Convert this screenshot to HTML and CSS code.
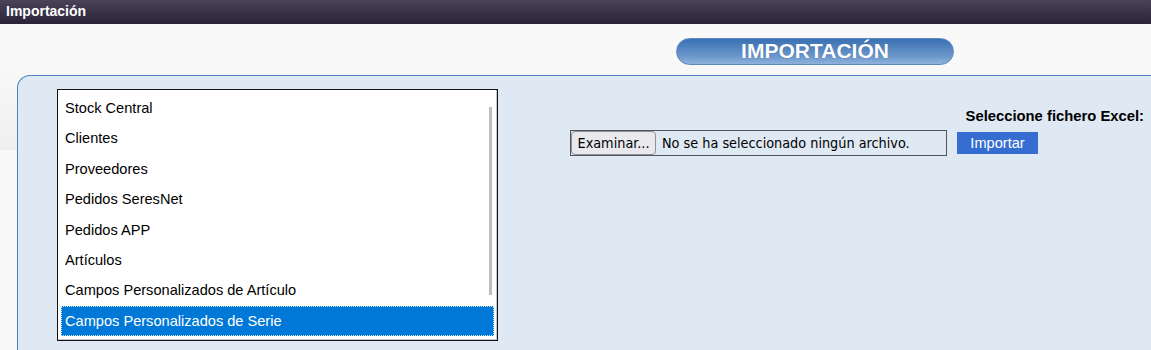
FILE: index.html
```html
<!DOCTYPE html>
<html lang="es">
<head>
  <meta charset="UTF-8">
  <title>Importación</title>
  <link rel="stylesheet" href="styles.css">
</head>
<body>
<div class="head">
  <h1>Importación</h1>
</div>
<div class="content">
  <div class="pill">IMPORTACIÓN</div>
  <div class="panel">
    <div class="listBox">
      <ul>
        <li>Stock Central</li>
        <li>Clientes</li>
        <li>Proveedores</li>
        <li>Pedidos SeresNet</li>
        <li>Pedidos APP</li>
        <li>Artículos</li>
        <li>Campos Personalizados de Artículo</li>
        <li class="selected">Campos Personalizados de Serie</li>
      </ul>
      <span class="scroll"></span>
    </div>
    <div class="side">
      <p class="label">Seleccione fichero Excel:</p>
      <div class="fileRow">
        <div class="fileInput">
          <span class="fileBtn">Examinar...</span>
          <span class="fileName">No se ha seleccionado ningún archivo.</span>
        </div>
        <span class="importBtn">Importar</span>
      </div>
    </div>
  </div>
</div>
</body>
</html>
```

FILE: styles.css
```css
*{
  margin: 0;
  padding: 0;
  box-sizing: border-box;
}
html,body{
  width: 100%;
  height: 100%;
  overflow: hidden;
  background-color: #f9f9f9;
  font-family: "Liberation Sans", Arial, sans-serif;
}
/*barra superior*/
.head{
  height: 24px;
  background: linear-gradient(to bottom, #4b4358, #2a2236);
  padding-left: 6px;
}
.head h1{
  color: #fff;
  font-size: 14px;
  line-height: 22px;
}
/*contenido*/
.content{
  height: 326px;
  padding-top: 14px;
  background: linear-gradient(to bottom, #f9f9f9 0, #f9f9f9 36px, #efefef 126px, #f9f9f9 126px);
}
.pill{
  width: 278px;
  height: 27px;
  margin-left: 676px;
  border: 1px solid #5a88bf;
  border-radius: 14px;
  background: linear-gradient(to bottom, #3a70b3, #6d98cc 70%, #8eb2dc);
  color: #fff;
  font-size: 21px;
  font-weight: bold;
  text-align: center;
  line-height: 24px;
  text-shadow: 0 0 1px #2c5b94;
}
.panel{
  display: flex;
  margin-top: 10px;
  margin-left: 17px;
  height: 275px;
  border: 1px solid #4a82c2;
  border-right: 0;
  border-bottom: 0;
  border-radius: 13px 0 0 0;
  background-color: #dfe9f4;
  padding-top: 13px;
}
/*lista*/
.listBox{
  position: relative;
  width: 441px;
  height: 252px;
  margin-left: 39px;
  border: 1px solid #111;
  box-shadow: inset -1px -1px 0 #c8c8c8;
  background-color: #fff;
  padding: 3px 3px 0 3px;
}
.listBox ul{
  list-style: none;
}
.listBox li{
  height: 30.4px;
  line-height: 30px;
  padding-left: 4px;
  font-size: 14.6px;
  color: #000;
  white-space: nowrap;
}
.listBox li.selected{
  background-color: #0078d7;
  color: #fff;
  outline: 1px dotted #cfe4f7;
  outline-offset: -1px;
}
.scroll{
  position: absolute;
  left: 431px;
  top: 17px;
  width: 3px;
  height: 188px;
  background-color: #bdbdbd;
}
/*lado derecho*/
.side{
  flex: 1;
  padding-top: 19px;
}
.label{
  text-align: right;
  padding-right: 7px;
  font-size: 14.8px;
  font-weight: bold;
  line-height: 17px;
  color: #000;
}
.fileRow{
  display: flex;
  align-items: center;
  margin-top: 5px;
  margin-left: 72px;
}
.fileInput{
  display: flex;
  align-items: center;
  width: 377px;
  height: 26px;
  border: 1px solid #555;
  font-family: "DejaVu Sans Condensed", sans-serif;
  font-size: 14.3px;
  color: #000;
  white-space: nowrap;
}
.fileBtn{
  height: 24px;
  line-height: 22px;
  width: 85px;
  border: 1px solid #8f8f9d;
  border-radius: 4px;
  background-color: #e9e9ed;
  text-align: center;
}
.fileName{
  padding-left: 6px;
}
.importBtn{
  margin-left: 10px;
  width: 81px;
  height: 22px;
  line-height: 22px;
  text-align: center;
  background-color: #366dd1;
  color: #fff;
  font-size: 14.6px;
}
```
